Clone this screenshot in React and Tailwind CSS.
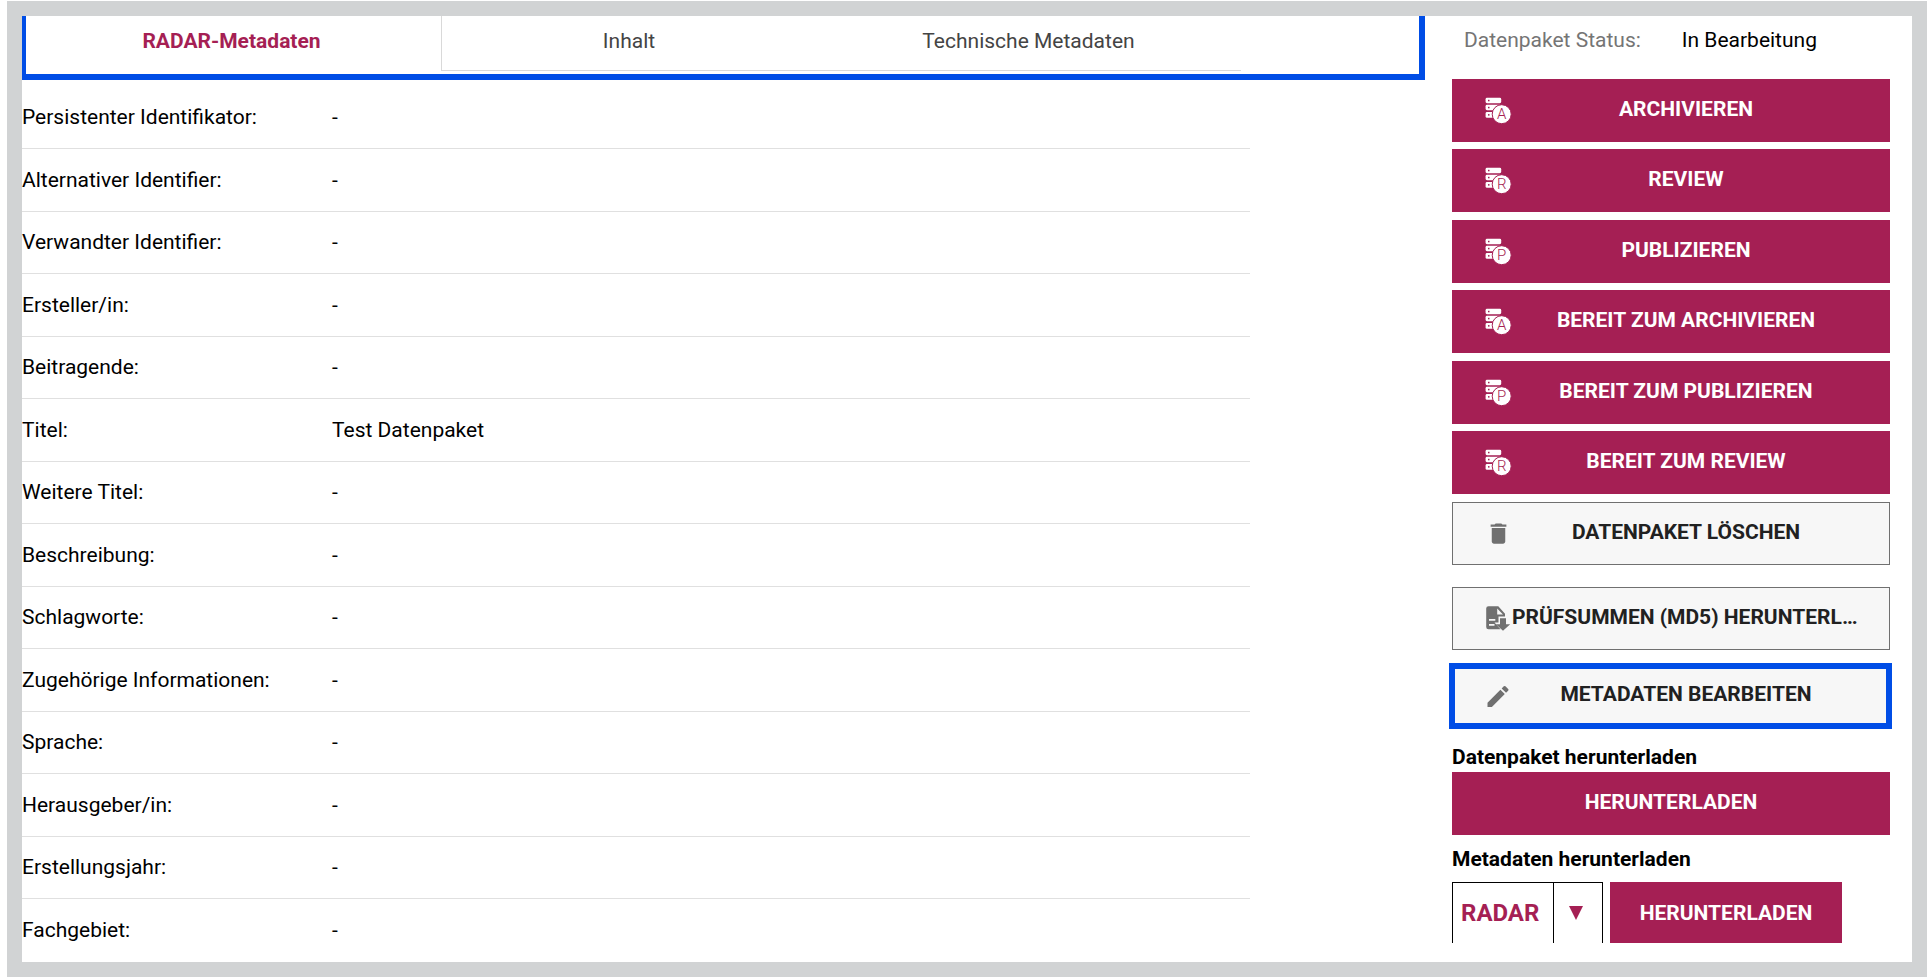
import { MdDelete, MdEdit } from "react-icons/md";

const FIELDS = [
  ["Persistenter Identifikator:", "-"],
  ["Alternativer Identifier:", "-"],
  ["Verwandter Identifier:", "-"],
  ["Ersteller/in:", "-"],
  ["Beitragende:", "-"],
  ["Titel:", "Test Datenpaket"],
  ["Weitere Titel:", "-"],
  ["Beschreibung:", "-"],
  ["Schlagworte:", "-"],
  ["Zugehörige Informationen:", "-"],
  ["Sprache:", "-"],
  ["Herausgeber/in:", "-"],
  ["Erstellungsjahr:", "-"],
  ["Fachgebiet:", "-"],
];

const ACTIONS = [
  ["A", "Archivieren"],
  ["R", "Review"],
  ["P", "Publizieren"],
  ["A", "Bereit zum Archivieren"],
  ["P", "Bereit zum Publizieren"],
  ["R", "Bereit zum Review"],
];

function ServerIcon({ letter }) {
  return (
    <svg width="28" height="28" viewBox="0 0 28 28" aria-hidden="true">
      <g fill="#fff">
        <rect x="1.6" y="0.8" width="15.6" height="5.4" rx="1.4" />
        <rect x="1.6" y="7.8" width="15.6" height="5.4" rx="1.4" />
        <rect x="1.6" y="15" width="12" height="5.8" rx="1.4" />
      </g>
      <g fill="#a51f54">
        <rect x="4" y="2.8" width="1.5" height="1.5" />
        <rect x="4" y="9.8" width="1.5" height="1.5" />
        <rect x="4" y="17.1" width="1.5" height="1.5" />
      </g>
      <circle cx="17.7" cy="17.2" r="9.5" fill="#fff" stroke="#a51f54" strokeWidth="1" />
      <text x="17.7" y="22.2" textAnchor="middle" fontSize="15" fontWeight="300" fill="#a51f54" fontFamily="Roboto, sans-serif">
        {letter}
      </text>
    </svg>
  );
}

function FileDownloadIcon() {
  return (
    <svg width="28" height="28" viewBox="0 0 28 28" aria-hidden="true">
      <path
        fill="#707070"
        d="M4.500 1.200H14.300L21 8.800V11.500H14.500V17.500H10.500L16.500 24.200H4.500A2.300 2.300 0 0 1 2.200 21.900V3.500A2.300 2.300 0 0 1 4.500 1.200z"
      />
      <path fill="#f7f7f7" d="M13.200 3.400V9.600H19zM5 14H11.300V15.700H5zM5 19H10.500V20.700H5z" />
      <path fill="#707070" d="M16 13.300h6v6h4.200L19 25.700 11.800 19.300H16z" />
    </svg>
  );
}

function ActionButton({ icon, children, className = "" }) {
  return (
    <button type="button" className={`flex w-full items-center font-bold uppercase ${className}`}>
      <span className="flex w-7 shrink-0 justify-center">{icon}</span>
      <span className="min-w-0 flex-1 truncate pb-1 text-center">{children}</span>
    </button>
  );
}

export default function App() {
  return (
    <div className="bg-white pt-px pr-px pb-px pl-[7px] font-[Roboto,sans-serif] text-[21px] leading-6 text-black">
      <div className="flex min-h-[976px] items-start border-[15px] border-[#d1d3d4]">
        <main className="min-w-0 flex-1">
          <nav className="flex h-16 border-r-6 border-b-6 border-l-4 border-[#004de6] pr-[178px]">
            <a href="#radar" aria-current="page" className="mb-[3px] flex basis-[416px] items-start justify-center border-r border-[#d9d9d9] pt-[13px] pr-1 font-bold text-[#a51f54]">
              RADAR-Metadaten
            </a>
            <a href="#inhalt" className="mb-[3px] flex basis-[374px] items-start justify-center border-b border-[#d9d9d9] pt-[13px] text-[#444]">
              Inhalt
            </a>
            <a href="#technisch" className="mb-[3px] flex flex-1 items-start justify-center border-b border-[#d9d9d9] pt-[13px] text-[#444]">
              Technische Metadaten
            </a>
          </nav>
          <div className="pt-[6px] pr-[175px]">
            <table className="w-full">
              <tbody>
                {FIELDS.map(([label, value]) => (
                  <tr key={label} className="h-[62px] border-b border-[#e0e0e0] last:border-0 even:h-[63px]">
                    <th scope="row" className="w-[310px] text-left font-normal">{label}</th>
                    <td>{value}</td>
                  </tr>
                ))}
              </tbody>
            </table>
          </div>
        </main>

        <aside className="mr-[22px] ml-[27px] w-[438px] shrink-0">
          <div className="flex h-[63px] gap-[41px] pt-3 pl-3">
            <span className="text-[#757575]">Datenpaket Status:</span>
            <span>In Bearbeitung</span>
          </div>
          {ACTIONS.map(([letter, text]) => (
            <ActionButton key={text} icon={<ServerIcon letter={letter} />} className="mb-[7px] h-[63px] bg-[#a51f54] pr-[30px] pl-8 text-white odd:mb-2">
              {text}
            </ActionButton>
          ))}
          <ActionButton icon={<MdDelete size={27} color="#707070" />} className="mb-[22px] h-[63px] border border-[#707070] bg-[#f7f7f7] pr-[29px] pl-[31px] text-[#212121]">
            Datenpaket löschen
          </ActionButton>
          <ActionButton icon={<FileDownloadIcon />} className="mb-[13px] h-[63px] border border-[#707070] bg-[#f7f7f7] pr-[29px] pl-[31px] text-[#212121]">
            Prüfsummen (MD5) herunterladen
          </ActionButton>
          <div className="-mr-[2px] -ml-[3px]">
            <ActionButton icon={<MdEdit size={31} color="#707070" />} className="h-[66px] border-6 border-[#004de6] bg-[#f7f7f7] pr-[26px] pl-[29px] text-[#212121]">
              Metadaten bearbeiten
            </ActionButton>
          </div>
          <h2 className="mt-4 font-bold">Datenpaket herunterladen</h2>
          <button type="button" className="mt-[3px] h-[63px] w-full bg-[#a51f54] pb-1 font-bold text-white">
            HERUNTERLADEN
          </button>
          <h2 className="mt-3 font-bold">Metadaten herunterladen</h2>
          <div className="mt-[11px] flex h-[61px] gap-[7px]">
            <div className="relative w-[151px] border border-b-0 border-black">
              <select aria-label="Metadatenformat" className="h-full w-full appearance-none pl-2 text-2xl font-bold text-[#a51f54]">
                <option>RADAR</option>
              </select>
              <span className="pointer-events-none absolute inset-y-0 right-0 flex w-[49px] justify-center border-l border-black pt-[23px] pr-1">
                <svg width="14" height="14" viewBox="0 0 14 14" aria-hidden="true">
                  <path d="M0 0h14L7 14z" fill="#a51f54" />
                </svg>
              </span>
            </div>
            <button type="button" className="w-[232px] bg-[#a51f54] font-bold text-white">
              HERUNTERLADEN
            </button>
          </div>
        </aside>
      </div>
    </div>
  );
}
